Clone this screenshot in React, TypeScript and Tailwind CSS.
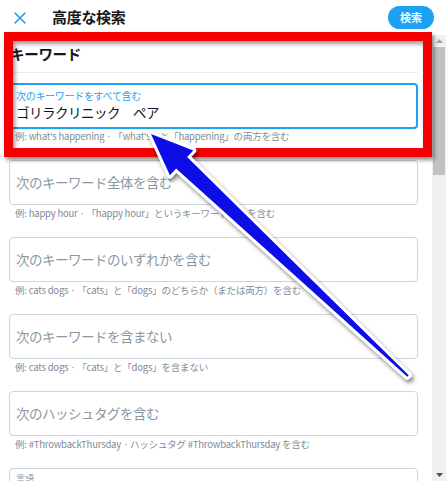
import React from "react";

function Field({ placeholder, helper }: { placeholder: string; helper: string }) {
  return (
    <div className="flex flex-col shrink-0">
      <div className="h-[45px] shrink-0 border border-[#ccd6dd] rounded-[4px] flex items-center px-[6px] text-[13.5px] tracking-[-0.5px] text-[#8a97a3]">
        {placeholder}
      </div>
      <div className="mt-[1px] h-[15px] shrink-0 leading-[15px] text-[9.5px] tracking-[-0.2px] text-[#7f8b96] pl-[6px] whitespace-nowrap">
        {helper}
      </div>
    </div>
  );
}

export default function App() {
  return (
    <div className="relative w-[446px] h-[481px] overflow-hidden bg-white font-['Noto_Sans_CJK_JP','Noto_Sans',sans-serif]">
      {/* Header */}
      <div className="h-[35px] flex items-center">
        <div className="w-[52px] pl-[14px] flex items-center">
          <svg width="12" height="12" viewBox="0 0 12 12">
            <path d="M1 1 L11 11 M11 1 L1 11" stroke="#1da1f2" strokeWidth="1.6" strokeLinecap="round" />
          </svg>
        </div>
        <div className="text-[15px] font-bold text-[#14171a] tracking-[-0.3px]">高度な検索</div>
        <div className="ml-auto mr-[12px] h-[23px] w-[46px] rounded-full bg-[#1da1f2] text-white text-[11px] font-bold flex items-center justify-center">
          検索
        </div>
      </div>

      <div className="flex h-[446px]">
        {/* Content */}
        <div className="w-[432px] h-[446px] overflow-hidden pl-[9px] pr-[14px] flex flex-col">
          <div className="h-[38px] shrink-0 border-b border-[#e6ecf0] flex items-center pl-[1px] text-[14.5px] font-bold text-[#14171a] tracking-[-0.3px]">
            キーワード
          </div>
          <div className="pt-[10px] shrink-0 flex flex-col gap-[16px]">
            <div className="flex flex-col shrink-0">
              <div className="h-[46px] shrink-0 border-2 border-[#1da1f2] rounded-[4px] px-[5px] pt-[5px] flex flex-col">
                <div className="h-[12px] text-[10px] leading-[12px] text-[#1da1f2] tracking-[-0.3px]">次のキーワードをすべて含む</div>
                <div className="mt-[2px] h-[16px] text-[13.5px] leading-[16px] text-[#14171a] tracking-[-0.5px]">ゴリラクリニック　ペア</div>
              </div>
              <div className="h-[15px] shrink-0 leading-[15px] text-[9.5px] tracking-[-0.2px] text-[#7f8b96] pl-[6px] whitespace-nowrap">
                例: what's happening · 「what's」と「happening」の両方を含む
              </div>
            </div>
            <Field placeholder="次のキーワード全体を含む" helper="例: happy hour · 「happy hour」というキーワード全体を含む" />
            <Field placeholder="次のキーワードのいずれかを含む" helper="例: cats dogs · 「cats」と「dogs」のどちらか（または両方）を含む" />
            <Field placeholder="次のキーワードを含まない" helper="例: cats dogs · 「cats」と「dogs」を含まない" />
            <Field placeholder="次のハッシュタグを含む" helper="例: #ThrowbackThursday · ハッシュタグ #ThrowbackThursday を含む" />
            <div className="h-[45px] shrink-0 border border-[#ccd6dd] rounded-[4px] px-[6px] pt-[3px] text-[9px] text-[#8a97a3]">言語</div>
          </div>
        </div>
        {/* Scrollbar */}
        <div className="w-[14px] bg-[#f0f0f0] flex flex-col items-center">
          <div className="h-[12px] flex items-center justify-center">
            <svg width="7" height="4" viewBox="0 0 7 4"><path d="M0 4 L3.5 0 L7 4 Z" fill="#a3a3a3" /></svg>
          </div>
          <div className="w-[12px] h-[128px] bg-[#c1c1c1]" />
          <div className="flex-1" />
          <div className="h-[12px] flex items-center justify-center">
            <svg width="7" height="4" viewBox="0 0 7 4"><path d="M0 0 L3.5 4 L7 0 Z" fill="#505050" /></svg>
          </div>
        </div>
      </div>

      {/* Red annotation frame */}
      <div className="absolute left-[4px] top-[32px] w-[428px] h-[125px] border-[9px] border-[#f50000] shadow-[2px_3px_4px_rgba(0,0,0,0.45),inset_2px_3px_4px_rgba(0,0,0,0.4)] pointer-events-none" />

      {/* Blue arrow */}
      <svg className="absolute left-0 top-0 pointer-events-none" width="446" height="481" viewBox="0 0 446 481">
        <defs>
          <filter id="sh" x="-20%" y="-20%" width="140%" height="140%">
            <feDropShadow dx="2" dy="3" stdDeviation="2" floodColor="#000" floodOpacity="0.5" />
          </filter>
        </defs>
        <path
          d="M151 134 L193.3 150.4 L187.1 157 L408.7 375.3 L407.3 376.7 L176.1 168.6 L169.9 175.2 Z"
          fill="#0a0ae6"
          stroke="#ffffff"
          strokeWidth="6"
          strokeLinejoin="round"
          paintOrder="stroke"
          filter="url(#sh)"
        />
      </svg>
    </div>
  );
}
